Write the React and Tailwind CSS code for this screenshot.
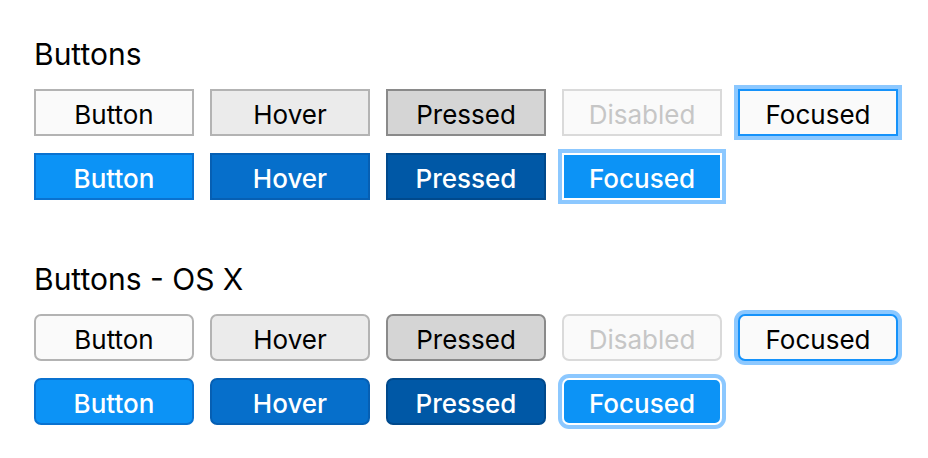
import React from "react";

const flat = [
  { label: "Button", cls: "bg-[#fafafa] border-[#b3b3b3] text-black" },
  { label: "Hover", cls: "bg-[#ebebeb] border-[#b3b3b3] text-black" },
  { label: "Pressed", cls: "bg-[#d5d5d5] border-[#8a8a8a] text-black" },
  { label: "Disabled", cls: "bg-[#fafafa] border-[#dadada] text-[#c6c6c6]" },
  {
    label: "Focused",
    cls: "bg-[#fafafa] border-[#1592fa] text-black shadow-[0_0_0_4px_#8cc8ff]",
  },
];

const primary = [
  { label: "Button", cls: "bg-[#0c93f6] border-[#0a72d0] text-white font-medium" },
  { label: "Hover", cls: "bg-[#066fcb] border-[#065fb3] text-white font-medium" },
  { label: "Pressed", cls: "bg-[#0058a6] border-[#00498c] text-white font-medium" },
  {
    label: "Focused",
    cls: "bg-[#0c93f6] border-white text-white font-medium shadow-[0_0_0_4px_#8cc8ff]",
  },
];

function Btn({ label, cls, round }) {
  return (
    <button
      className={`w-[160px] h-[47px] border-2 pt-[4px] flex items-center justify-center text-[26px] ${cls} ${
        round ? "rounded-[7px]" : ""
      }`}
    >
      {label}
    </button>
  );
}

function Section({ title, round }) {
  return (
    <div className="flex flex-col">
      <h2 className="text-[30px] leading-[36px] text-black">{title}</h2>
      <div className="flex gap-4 mt-[17px]">
        {flat.map((b) => (
          <Btn key={b.label} {...b} round={round} />
        ))}
      </div>
      <div className="flex gap-4 mt-[17px]">
        {primary.map((b) => (
          <Btn key={b.label} {...b} round={round} />
        ))}
      </div>
    </div>
  );
}

export default function App() {
  return (
    <div
      className="w-[928px] h-[458px] bg-white pl-[34px] pt-[36px] flex flex-col gap-[61px]"
      style={{ fontFamily: "Inter, 'Liberation Sans', sans-serif" }}
    >
      <Section title="Buttons" />
      <Section title="Buttons - OS X" round />
    </div>
  );
}
